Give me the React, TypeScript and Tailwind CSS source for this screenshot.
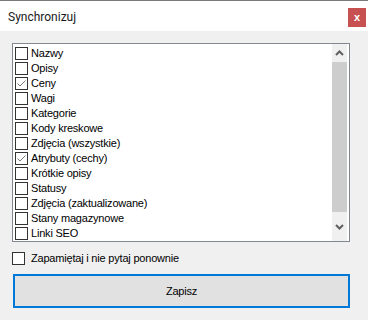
import React from "react";

const items: { label: string; checked: boolean }[] = [
  { label: "Nazwy", checked: false },
  { label: "Opisy", checked: false },
  { label: "Ceny", checked: true },
  { label: "Wagi", checked: false },
  { label: "Kategorie", checked: false },
  { label: "Kody kreskowe", checked: false },
  { label: "Zdjęcia (wszystkie)", checked: false },
  { label: "Atrybuty (cechy)", checked: true },
  { label: "Krótkie opisy", checked: false },
  { label: "Statusy", checked: false },
  { label: "Zdjęcia (zaktualizowane)", checked: false },
  { label: "Stany magazynowe", checked: false },
  { label: "Linki SEO", checked: false },
];

function Box({ checked }: { checked: boolean }) {
  return (
    <div className="w-[13px] h-[13px] border border-[#333333] bg-white flex items-center justify-center shrink-0">
      {checked && (
        <svg width="11" height="11" viewBox="0 0 11 11">
          <path d="M1.5 5.5 L4 8 L9.5 2.5" fill="none" stroke="#7a7a7a" strokeWidth="1" />
        </svg>
      )}
    </div>
  );
}

export default function App() {
  return (
    <div
      className="w-[368px] h-[320px] bg-[#f0f0f0] flex flex-col text-black tracking-[-0.2px]"
      style={{ fontFamily: '"Liberation Sans", Arial, sans-serif' }}
    >
      <div className="h-[31px] bg-white border-t border-[#7a7a7a] flex items-start justify-between pl-[8px] pr-[2px] tracking-normal">
        <div
          className="text-[12px] leading-none mt-[10px] text-[#1a1a1a]"
          style={{ fontFamily: 'Roboto, "Liberation Sans", sans-serif' }}
        >
          Synchronizuj
        </div>
        <div className="w-[18px] h-[19px] mt-[7px] bg-[#c75050] flex items-center justify-center text-white text-[11px] font-bold leading-none">
          x
        </div>
      </div>
      <div className="px-[12px] pt-[12px] flex flex-col">
        <div className="w-[338px] h-[199px] border border-[#828790] bg-white flex overflow-hidden">
          <div className="flex-1 flex flex-col pt-[2px] pl-[2px] overflow-hidden">
            {items.map((it) => (
              <div key={it.label} className="h-[15px] flex items-center gap-[3px] shrink-0 text-[11px] leading-none">
                <Box checked={it.checked} />
                <span>{it.label}</span>
              </div>
            ))}
          </div>
          <div className="w-[15px] mr-[2px] bg-[#f0f0f0] flex flex-col">
            <div className="h-[18px] flex items-center justify-center">
              <svg width="9" height="6" viewBox="0 0 9 6">
                <path d="M1 5 L4.5 1.5 L8 5" fill="none" stroke="#606060" strokeWidth="2" />
              </svg>
            </div>
            <div className="h-[150px] bg-[#cdcdcd]" />
            <div className="flex-1 flex items-center justify-center">
              <svg width="9" height="6" viewBox="0 0 9 6">
                <path d="M1 1 L4.5 4.5 L8 1" fill="none" stroke="#606060" strokeWidth="2" />
              </svg>
            </div>
          </div>
        </div>
        <div className="flex items-center gap-[6px] mt-[9px] h-[15px] text-[11px] leading-none">
          <Box checked={false} />
          <span>Zapamiętaj i nie pytaj ponownie</span>
        </div>
        <div className="mt-[8px] ml-[1px] w-[337px] h-[34px] border-2 border-[#0078d7] bg-[#e1e1e1] flex items-center justify-center text-[11px]">
          Zapisz
        </div>
      </div>
    </div>
  );
}
